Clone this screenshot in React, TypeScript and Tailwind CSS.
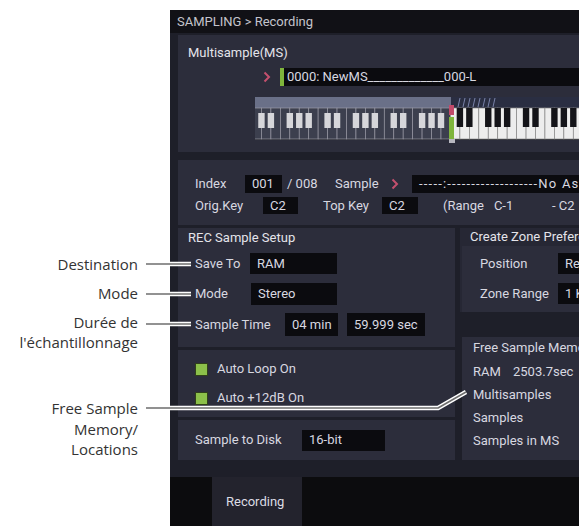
import React from "react";

// ── Fonts ──────────────────────────────────────────────────────────────
const UI = { fontFamily: "Roboto, 'Liberation Sans', sans-serif" };
const NOTE = { fontFamily: "'Open Sans', 'Liberation Sans', sans-serif" };

// ── Small pieces ───────────────────────────────────────────────────────
function Chevron() {
  return (
    <svg width="8" height="12" viewBox="0 0 8 12" className="shrink-0">
      <path d="M1.5 1.5 L6 6 L1.5 10.5" fill="none" stroke="#c4506e" strokeWidth="2" />
    </svg>
  );
}

function Box({ className = "", children }: { className?: string; children: React.ReactNode }) {
  return (
    <div className={`bg-[#0b0b0f] flex items-center px-[7px] shrink-0 whitespace-nowrap overflow-hidden ${className}`}>
      {children}
    </div>
  );
}

function Check({ label }: { label: string }) {
  return (
    <div className="flex items-center h-[16px]">
      <span className="w-[13px] h-[13px] bg-[#8cc04a] border border-[#30401a] shrink-0" />
      <span className="ml-[9px]">{label}</span>
    </div>
  );
}

// ── Keyboard drawing ───────────────────────────────────────────────────
const KW = 9.45;
const SPLIT = 21;
const BLACK_AFTER = [0, 1, 3, 4, 5];

function Keyboard() {
  const whites = Array.from({ length: 36 }, (_, i) => i);
  return (
    <svg width="330" height="48" viewBox="0 0 330 48" className="block">
      <rect x="0" y="0" width="330" height="43" fill="#1a1b22" />
      <rect x="0" y="0" width="196" height="11" fill="#6a7088" />
      <rect x="196" y="0" width="134" height="11" fill="#2a2e42" />
      {Array.from({ length: 8 }, (_, i) => (
        <line key={i} x1={203 + i * 5} y1="10" x2={205 + i * 5} y2="1" stroke="#8e98c4" strokeWidth="0.8" />
      ))}
      {whites.map((i) => {
        const x = -3 + i * KW;
        const dim = i < SPLIT;
        return (
          <rect key={`w${i}`} x={x} y="11" width={KW} height="31"
            fill={dim ? "#3c3f4e" : "#ededed"} stroke={dim ? "#9a9aa6" : "#8a8a8a"} strokeWidth="0.7" />
        );
      })}
      {whites.map((i) => {
        if (!BLACK_AFTER.includes(i % 7)) return null;
        const x = -3 + i * KW + KW - 3.2;
        const dim = i < SPLIT - 1;
        return (
          <rect key={`b${i}`} x={x} y={dim ? 16 : 11} width="6.4" height={dim ? 15 : 19}
            fill={dim ? "#d6d6da" : "#141419"} />
        );
      })}
      <rect x="194" y="20" width="5" height="22" fill="#7fb53c" />
      <rect x="194" y="8" width="5" height="10" fill="#c24a6a" />
      <rect x="194" y="42" width="6" height="4" fill="#b8b8c0" />
    </svg>
  );
}

// ── App ────────────────────────────────────────────────────────────────
export default function App() {
  return (
    <div className="relative w-[579px] h-[526px] bg-white overflow-hidden flex">
      {/* Annotations */}
      <div className="w-[170px] shrink-0 flex flex-col items-end pr-[32px] text-[15px] leading-[20px] text-[#333]" style={NOTE}>
        <div className="mt-[254px]">Destination</div>
        <div className="mt-[9px]">Mode</div>
        <div className="mt-[9px] text-right">
          Durée de<br />l'échantillonnage
        </div>
        <div className="mt-[46px] text-right leading-[20.5px]">
          Free Sample<br />Memory/<br />Locations
        </div>
      </div>

      {/* Screen */}
      <div className="mt-[10px] w-[409px] h-[516px] overflow-hidden bg-[#1e1f29] text-[13px] text-[#d8d8e0] flex flex-col" style={UI}>
        <div className="h-[23px] shrink-0 bg-[#111116] flex items-center pl-[7px] text-[#c4c4cc] w-[480px]">
          SAMPLING &gt; Recording
        </div>

        <div className="w-[480px] pl-[8px] flex flex-col">
          {/* Multisample */}
          <div className="mt-[2px] h-[117px] bg-[#2c2d3b] flex flex-col">
            <div className="mt-[10px] h-[16px] flex items-center pl-[10px] text-[#e4e4ea]">Multisample(MS)</div>
            <div className="mt-[7px] flex items-center pl-[85px]">
              <Chevron />
              <div className="ml-[9px] flex-1 h-[18px] bg-[#0b0b0f] flex items-center whitespace-nowrap">
                <span className="w-[4px] h-full bg-[#7fb53c]" />
                <span className="ml-[3px]">0000: NewMS</span>
                <span>_____________</span>
                <span>000-L</span>
              </div>
            </div>
            <div className="mt-[11px] pl-[77px]">
              <Keyboard />
            </div>
          </div>

          {/* Index */}
          <div className="mt-[8px] h-[65px] bg-[#2c2d3b] flex flex-col pl-[17px]">
            <div className="mt-[15px] h-[18px] flex items-center whitespace-nowrap">
              <span className="w-[50px] shrink-0">Index</span>
              <Box className="w-[37px] h-[18px]">001</Box>
              <span className="ml-[5px] w-[48px] shrink-0">/ 008</span>
              <span className="w-[56px] shrink-0">Sample</span>
              <Chevron />
              <Box className="ml-[13px] flex-1 h-[18px] tracking-[1.2px]">-----:-------------------No Assign</Box>
            </div>
            <div className="mt-[4px] h-[17px] flex items-center whitespace-nowrap">
              <span className="w-[68px] shrink-0">Orig.Key</span>
              <Box className="w-[35px] h-[17px]">C2</Box>
              <span className="ml-[25px] w-[59px] shrink-0">Top Key</span>
              <Box className="w-[36px] h-[17px]">C2</Box>
              <span className="ml-[25px] shrink-0">(Range</span>
              <span className="ml-[10px] w-[58px] shrink-0">C-1</span>
              <span className="shrink-0">- C2</span>
            </div>
          </div>

          {/* Lower panels */}
          <div className="mt-[3px] flex gap-[5px]">
            <div className="w-[277px] shrink-0 flex flex-col gap-[3px]">
              <div className="h-[119px] bg-[#2c2d3b] flex flex-col">
                <div className="h-[20px] flex items-center pl-[10px] text-[#e4e4ea]">REC Sample Setup</div>
                <div className="mt-[5px] pl-[17px] flex items-center">
                  <span className="w-[55px] shrink-0">Save To</span>
                  <Box className="w-[87px] h-[21px]">RAM</Box>
                </div>
                <div className="mt-[9px] pl-[17px] flex items-center">
                  <span className="w-[56px] shrink-0">Mode</span>
                  <Box className="w-[86px] h-[22px]">Stereo</Box>
                </div>
                <div className="mt-[8px] pl-[17px] flex items-center">
                  <span className="w-[90px] shrink-0">Sample Time</span>
                  <Box className="w-[53px] h-[23px]">04 min</Box>
                  <Box className="ml-[9px] w-[78px] h-[23px]">59.999 sec</Box>
                </div>
              </div>
              <div className="h-[67px] bg-[#2c2d3b] flex flex-col pl-[17px] pt-[11px] gap-[13px]">
                <Check label="Auto Loop On" />
                <Check label="Auto +12dB On" />
              </div>
              <div className="h-[40px] bg-[#2c2d3b] flex items-center pl-[17px]">
                <span className="w-[107px] shrink-0">Sample to Disk</span>
                <Box className="w-[83px] h-[21px]">16-bit</Box>
              </div>
            </div>

            <div className="flex-1 flex flex-col">
              <div className="h-[84px] bg-[#262734] flex flex-col">
                <div className="h-[18px] flex items-center pl-[10px] whitespace-nowrap text-[#e4e4ea]">Create Zone Preference</div>
                <div className="flex-1 ml-[2px] bg-[#2c2d3b] flex flex-col pl-[18px]">
                  <div className="mt-[7px] flex items-center">
                    <span className="w-[78px] shrink-0">Position</span>
                    <Box className="w-[80px] h-[21px]">Replace</Box>
                  </div>
                  <div className="mt-[9px] flex items-center">
                    <span className="w-[78px] shrink-0">Zone Range</span>
                    <Box className="w-[80px] h-[21px]">1 Key</Box>
                  </div>
                </div>
              </div>
              <div className="mt-[25px] ml-[2px] h-[123px] bg-[#2c2d3b] flex flex-col pl-[11px] whitespace-nowrap">
                <div className="mt-[2px] h-[18px] flex items-center">Free Sample Memory/Locations</div>
                <div className="mt-[3px] h-[23px] flex items-center">
                  <span className="w-[40px]">RAM</span>
                  <span>2503.7sec</span>
                </div>
                <div className="h-[23px] flex items-center">Multisamples</div>
                <div className="h-[23px] flex items-center">Samples</div>
                <div className="h-[23px] flex items-center">Samples in MS</div>
              </div>
            </div>
          </div>
        </div>

        {/* Tab bar */}
        <div className="mt-[17px] flex-1 bg-[#0c0c0e] flex pl-[42px]">
          <div className="w-[90px] bg-[#23232d] flex items-center pl-[14px] text-[#dcdce4]">Recording</div>
        </div>
      </div>

      {/* Leader lines */}
      <svg className="absolute inset-0 pointer-events-none" width="579" height="526">
        {["M146 264 L191 264", "M146 294 L191 294", "M146 324 L191 324", "M146 408 L438 408 L466 392"].map((d, i) => (
          <g key={i}>
            <path d={d} fill="none" stroke="#ffffff" strokeWidth="4.5" strokeLinejoin="round" />
            <path d={d} fill="none" stroke="#6e6e6e" strokeWidth="1.6" strokeLinejoin="round" />
          </g>
        ))}
      </svg>
    </div>
  );
}
